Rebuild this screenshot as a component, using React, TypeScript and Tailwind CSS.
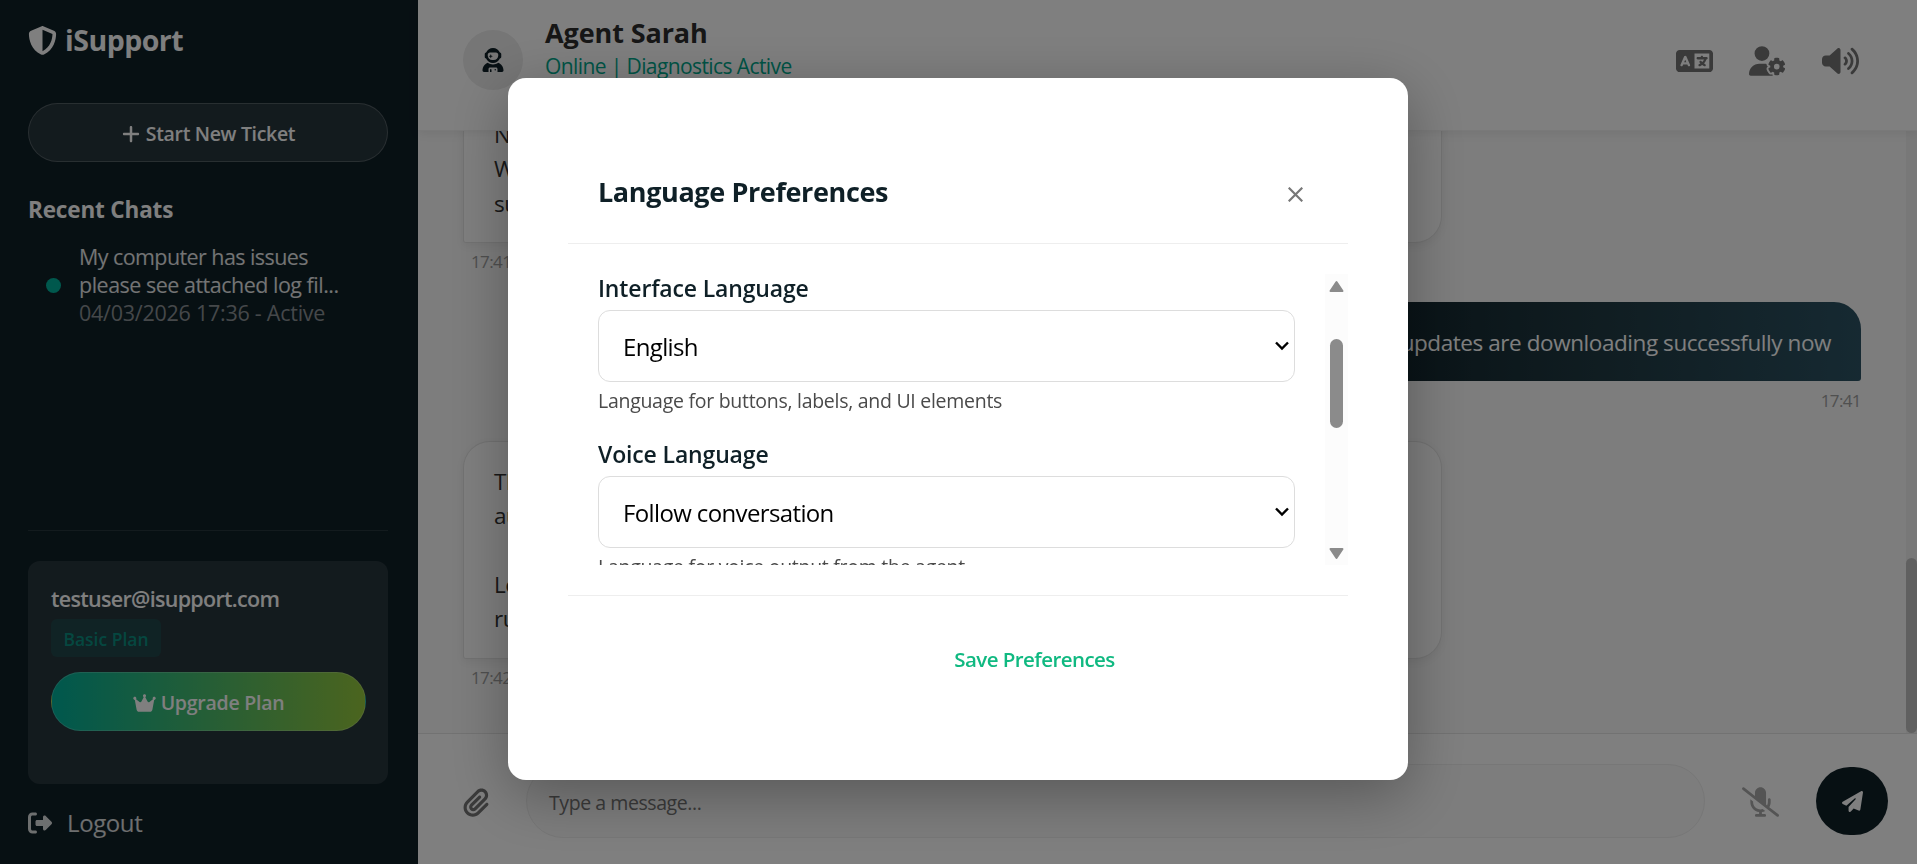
import { useState } from 'react';
import type { ReactNode } from 'react';
import {
  FaCrown,
  FaLanguage,
  FaMicrophoneSlash,
  FaPaperclip,
  FaPaperPlane,
  FaPlus,
  FaRightFromBracket,
  FaShieldHalved,
  FaUserAstronaut,
  FaUserGear,
  FaVolumeHigh,
} from 'react-icons/fa6';

function Sidebar() {
  return (
    <aside className="flex w-[418px] shrink-0 flex-col bg-[#0f2027] px-7 pt-[22px] text-white">
      <div className="flex h-9 items-center gap-2">
        <FaShieldHalved className="size-[29px]" />
        <span className="text-[28.5px] font-bold leading-9 tracking-[-0.5px]">iSupport</span>
      </div>

      <button className="mt-[45px] flex h-[59px] w-[360px] shrink-0 items-center justify-center gap-[5px] rounded-full border border-white/20 bg-white/10 pt-0.5 text-[19.5px] font-semibold tracking-[-0.33px]">
        <FaPlus className="size-5" />
        Start New Ticket
      </button>

      <h3 className="mt-[33px] text-[22.5px] font-bold leading-[30px] tracking-[-0.15px]">Recent Chats</h3>

      <div className="mt-[18px] flex items-center gap-[18px] pl-[18px]">
        <span className="size-[15px] shrink-0 rounded-full bg-[#00b09b]" />
        <div className="text-[21.5px] leading-7 tracking-[-0.5px] text-white/90">
          <p className="tracking-[-0.58px]">My computer has issues</p>
          <p>please see attached log fil...</p>
          <p className="tracking-[-0.25px] text-[#8b9195]">04/03/2026 17:36 - Active</p>
        </div>
      </div>

      <div className="mt-auto w-[360px] border-t border-white/10 pt-[30px]">
        <div className="h-[223px] rounded-xl bg-white/10 px-[23px] pt-[23px]">
          <p className="text-[21.5px] font-semibold leading-[30px] tracking-[-0.7px]">testuser@isupport.com</p>
          <span className="mt-[5px] flex h-[38px] w-[110px] items-center justify-center rounded-md bg-[#00b09b]/15 pt-0.5 text-[17.5px] font-semibold text-[#00b09b]/70">
            Basic Plan
          </span>
          <button className="mt-[15px] flex h-[59px] w-[315px] items-center justify-center gap-[5px] rounded-full border border-white/20 bg-linear-to-r/srgb from-[#00b09b] to-[#96c93d] pt-0.5 text-[19.5px] font-semibold tracking-[-0.25px]">
            <FaCrown className="h-5 w-[23px]" />
            Upgrade Plan
          </button>
        </div>
        <div className="flex h-20 items-center gap-[15px] pb-0.5 text-[24px] tracking-[-0.4px] text-white/85">
          <FaRightFromBracket className="size-6" />
          Logout
        </div>
      </div>
    </aside>
  );
}

function ChatHeader() {
  return (
    <header className="z-10 flex h-[131px] shrink-0 items-start justify-between border-b border-black/5 bg-white pl-[45px] pr-[58px] shadow-[0_2px_10px_rgba(0,0,0,0.08)]">
      <div className="flex gap-[22px]">
        <div className="mt-[30px] flex size-[60px] items-center justify-center rounded-full bg-[#ececec]">
          <FaUserAstronaut className="h-6 w-[22px] text-[#0f2027]" />
        </div>
        <div className="pt-[15px]">
          <h2 className="text-[27px] font-bold leading-9 tracking-[-0.1px] text-[#2d2d2d]">Agent Sarah</h2>
          <p className="text-[21px] leading-[30px] tracking-[-0.6px] text-[#00a88c]">Online | Diagnostics Active</p>
        </div>
      </div>
      <div className="flex items-center gap-9 pt-[43px] text-[#757575]">
        <FaLanguage className="h-9 w-[37px]" />
        <FaUserGear className="h-9 w-[37px]" />
        <FaVolumeHigh className="h-9 w-[37px]" />
      </div>
    </header>
  );
}

function AgentBubble({ className, children }: { className: string; children: ReactNode }) {
  return (
    <div
      className={`w-[979px] rounded-[27px] rounded-bl-[3px] border border-black/10 bg-white px-[30px] text-[22.5px] leading-[34.4px] tracking-[-0.4px] text-[#333333] shadow-[0_3px_9px_rgba(0,0,0,0.06)] ${className}`}
    >
      {children}
    </div>
  );
}

function Messages() {
  return (
    <main className="flex min-h-0 flex-1 bg-[#fafafa]">
      <div className="flex min-w-0 flex-1 flex-col overflow-hidden pl-[45px] pr-[45px] text-[17px] leading-6 tracking-[-0.6px] text-[#a0a0a0]">
        <AgentBubble className="mt-[-80px] h-[192px] shrink-0 pt-[66px]">
          <p>Nice work getting that resolved.</p>
          <p>We can keep checking the remaining</p>
          <p>support items whenever you are ready.</p>
        </AgentBubble>
        <p className="pl-2 pt-[7px]">17:41</p>

        <div className="mt-[28px] flex h-[79px] w-[530px] shrink-0 items-center justify-end self-end rounded-[27px] rounded-br-[3px] bg-linear-to-r/srgb from-[#0f2027] via-[#203a43] to-[#2c5364] pr-[30px] pt-0.5 text-[22.5px] tracking-[-0.43px] text-white">
          The updates are downloading successfully now
        </div>
        <p className="self-end pt-2">17:41</p>

        <AgentBubble className="mt-[28px] h-[218px] shrink-0 pt-[23px]">
          <p>That is great news. Windows will finish the rest</p>
          <p>automatically.</p>
          <p className="mt-[34px]">Let me know if you would like to</p>
          <p>run another check.</p>
        </AgentBubble>
        <p className="pl-2 pt-[7px]">17:42</p>
      </div>
      <div className="flex w-[11px] flex-col justify-end bg-[#f1f1f1]">
        <div className="h-[175px] rounded-full bg-[#c1c1c1]" />
      </div>
    </main>
  );
}

function Composer() {
  return (
    <footer className="flex h-[131px] shrink-0 items-center border-t border-black/10 bg-white pl-[45px] pr-[29px] pt-1">
      <FaPaperclip className="mt-0.5 h-[29px] w-[26px] shrink-0 text-[#757575]" />
      <div className="ml-[37px] flex h-[74px] flex-1 items-center rounded-full border border-[#eeeeee] bg-[#fafafa] px-[22px] pt-1 text-[19.5px] tracking-[-0.43px] text-[#757575]">
        Type a message...
      </div>
      <FaMicrophoneSlash className="ml-[37px] mt-0.5 h-[30px] w-[37px] shrink-0 text-[#a8a8a8]" />
      <button className="ml-[37px] flex h-[68px] w-[72px] shrink-0 items-center justify-center rounded-full bg-[#0f2027] text-white">
        <FaPaperPlane className="size-[21px]" />
      </button>
    </footer>
  );
}

interface LanguageFieldProps {
  label: string;
  value: string;
  hint: string;
}

function LanguageField({ label, value, hint }: LanguageFieldProps) {
  return (
    <div className="h-[166px] w-[697px] shrink-0 text-[#0f2027]">
      <p className="h-[36px] text-[23px] font-semibold leading-[28px] tracking-[-0.15px]">{label}</p>
      <div className="flex h-[72px] items-center justify-between rounded-xl border border-[#dddddd] pl-6 pr-[5px] text-[24px] tracking-[-0.63px] text-black">
        <span className="pt-0.5">{value}</span>
        <svg className="h-[10px] w-[14px]" viewBox="0 0 14 10" fill="none" stroke="currentColor" strokeWidth="2.4">
          <path d="M1 1.5 7 7.5 13 1.5" />
        </svg>
      </div>
      <p className="pt-[5px] text-[19.5px] leading-7 tracking-[-0.28px] text-[#4a4a4a]">{hint}</p>
    </div>
  );
}

function LanguageModal({ onClose }: { onClose: () => void }) {
  return (
    <div className="fixed inset-0 z-20 flex items-start justify-center bg-black/50 pr-[1px] pt-[78px]">
      <div className="h-[702px] w-[900px] rounded-[18px] bg-white px-[60px] pt-[60px] shadow-[0_15px_60px_rgba(0,0,0,0.3)]">
        <div className="flex h-[106px] items-center justify-between border-b border-[#eeeeee] px-[30px] pt-1">
          <h3 className="text-[27px] font-bold tracking-[-0.38px] text-[#0f2027]">Language Preferences</h3>
          <button onClick={onClose} aria-label="Close" className="mr-[15px] mt-[3px] text-[#777777]">
            <svg className="size-[15px]" viewBox="0 0 15 15" stroke="currentColor" strokeWidth="2.2">
              <path d="M0.7 0.7 14.3 14.3M14.3 0.7 0.7 14.3" />
            </svg>
          </button>
        </div>

        <div className="mt-[30px] flex h-[291px] justify-between pl-[30px]">
          <div className="flex flex-col overflow-hidden">
            <LanguageField
              label="Interface Language"
              value="English"
              hint="Language for buttons, labels, and UI elements"
            />
            <LanguageField
              label="Voice Language"
              value="Follow conversation"
              hint="Language for voice output from the agent"
            />
          </div>
          <div className="flex w-[23px] flex-col items-center bg-[#fcfcfc] pb-[5px] pt-[6px] text-[#8b8b8b]">
            <svg className="h-[12px] w-[15px]" viewBox="0 0 15 12" fill="currentColor" stroke="currentColor" strokeWidth="2" strokeLinejoin="round">
              <path d="M7.5 2 13.5 11H1.5Z" />
            </svg>
            <div className="mt-[47px] h-[89px] w-[13px] rounded-full bg-[#8b8b8b]" />
            <svg className="mt-auto h-[12px] w-[15px]" viewBox="0 0 15 12" fill="currentColor" stroke="currentColor" strokeWidth="2" strokeLinejoin="round">
              <path d="M7.5 10 13.5 1H1.5Z" />
            </svg>
          </div>
        </div>

        <div className="mt-[30px] border-t border-[#eeeeee] pt-[47px] text-center">
          <button className="ml-[153px] text-[20.5px] font-semibold leading-8 tracking-[-0.55px] text-[#10b981]">
            Save Preferences
          </button>
        </div>
      </div>
    </div>
  );
}

export default function App() {
  const [showLanguage, setShowLanguage] = useState(true);

  return (
    <div className="flex h-screen overflow-hidden bg-white font-['Open_Sans','Noto_Sans',sans-serif]">
      <Sidebar />
      <div className="flex min-w-0 flex-1 flex-col">
        <ChatHeader />
        <Messages />
        <Composer />
      </div>
      {showLanguage && <LanguageModal onClose={() => setShowLanguage(false)} />}
    </div>
  );
}
